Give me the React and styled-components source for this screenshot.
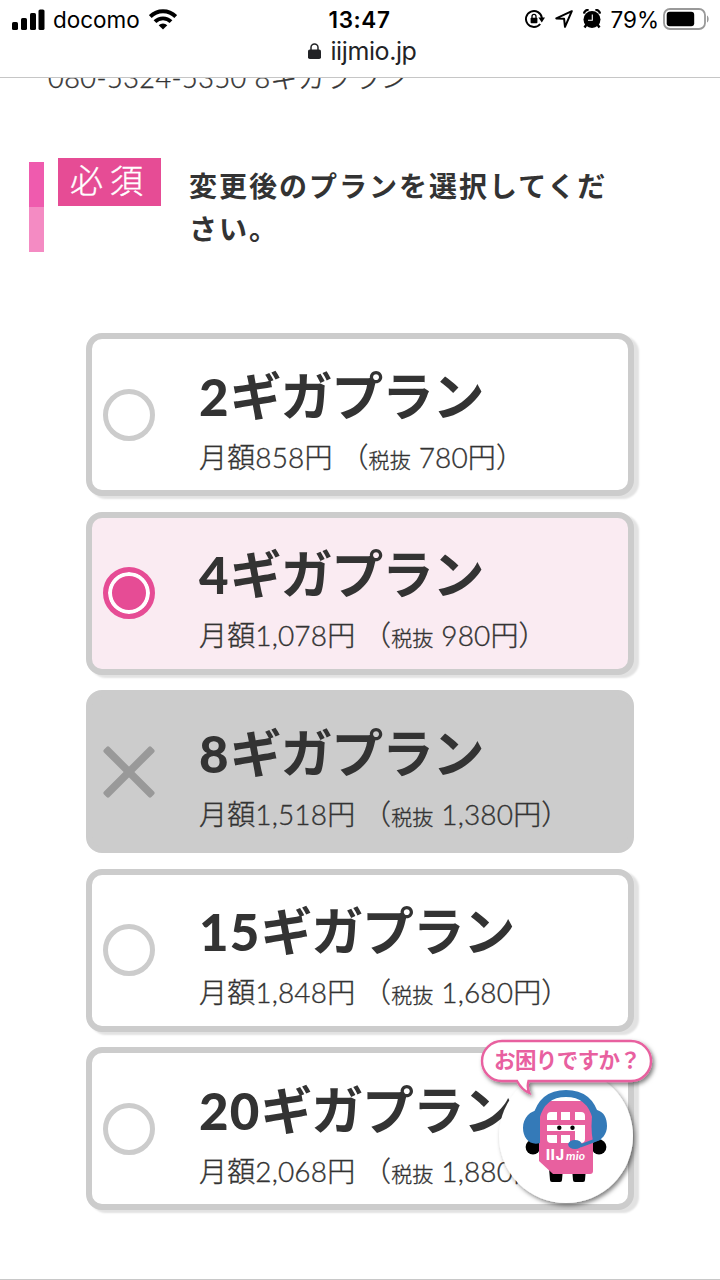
import React, { useState } from 'react';
import styled, { createGlobalStyle } from 'styled-components';

const GlobalStyle = createGlobalStyle`
  * {
    box-sizing: border-box;
  }

  body {
    margin: 0;
    background-color: #fff;
    color: #333;
    font-family: Lato, 'Noto Sans CJK JP', sans-serif;
  }
`;

const Screen = styled.div`
  display: flex;
  flex-direction: column;
  width: 720px;
  height: 1280px;
  overflow: hidden;
  border-bottom: 1px solid #c8c8c8;
`;

const BrowserHeader = styled.header`
  flex: none;
  height: 78px;
  border-bottom: 1px solid #c6c6c6;
  font-family: Inter, 'Liberation Sans', sans-serif;
  color: #000;
`;

const StatusBar = styled.div`
  display: grid;
  grid-template-columns: 1fr auto 1fr;
  align-items: center;
  height: 38px;
  padding: 0 11px 0 12px;
`;

const StatusGroup = styled.div`
  display: flex;
  align-items: center;
  gap: ${props => props.$gap || 0}px;
  justify-content: ${props => props.$align || 'flex-start'};

  svg {
    flex: none;
  }
`;

const Carrier = styled.span`
  margin: 1px 9px 0 8px;
  font-size: 22.5px;
  line-height: 36px;
`;

const Clock = styled.span`
  margin: 1px 2px 0 0;
  font-size: 22.5px;
  font-weight: 600;
  line-height: 36px;
  letter-spacing: 0.6px;
`;

const BatteryLevel = styled.span`
  margin: 1px 4px 0 9px;
  font-size: 22.5px;
  line-height: 36px;
`;

const AddressBar = styled.div`
  display: flex;
  align-items: center;
  justify-content: center;
  gap: 9px;
  height: 26px;
  padding-left: 5px;
  font-size: 25px;
  line-height: 26px;
  letter-spacing: -0.4px;
  color: #222326;
`;

const Content = styled.main`
  flex: 1;
  overflow: hidden;
`;

const CurrentPlan = styled.p`
  margin: -20px 0 0 48px;
  font-size: 27px;
  font-weight: 300;
  line-height: 40px;
  letter-spacing: 0.5px;
  white-space: nowrap;
  -webkit-text-stroke: 0.4px #333;
`;

const Question = styled.div`
  display: flex;
  align-items: flex-start;
  margin: 60px 0 0 29px;
`;

const Marker = styled.div`
  width: 15px;
  height: 90px;
  margin-top: 4px;
  background: linear-gradient(#ef5bae 50%, #f48bc3 50%);
`;

const RequiredLabel = styled.span`
  width: 103px;
  height: 48px;
  margin-left: 14px;
  padding-left: 12px;
  background-color: #e64c95;
  color: #fff;
  font-size: 33px;
  font-weight: 300;
  line-height: 44px;
  letter-spacing: 7px;
  white-space: nowrap;
  -webkit-text-stroke: 0.4px #fff;
`;

const QuestionText = styled.h2`
  width: 430px;
  margin: 7px 0 0 28px;
  font-size: 28px;
  font-weight: 700;
  line-height: 43px;
  letter-spacing: 2px;
`;

const PlanList = styled.ul`
  display: flex;
  flex-direction: column;
  gap: 15.5px;
  width: 547.5px;
  margin: 81px 0 0 86px;
  padding: 0;
  list-style: none;
`;

const PlanCard = styled.li`
  display: flex;
  align-items: center;
  height: 163px;
  padding: 0 10.5px;
  border: 6px solid #ccc;
  border-radius: 16px;
  background-color: ${props => (props.$disabled ? '#ccc' : props.$selected ? '#faebf2' : '#fff')};
  box-shadow: ${props => (props.$disabled ? 'none' : '4.5px 3px 2px #e2e2e2')};
  cursor: ${props => (props.$disabled ? 'default' : 'pointer')};

  > svg {
    flex: none;
  }
`;

const Radio = styled.span`
  flex: none;
  width: 52px;
  height: 52px;
  border: 5.5px solid ${props => (props.$selected ? '#e64c95' : '#ccc')};
  border-radius: 50%;
  background-color: ${props => (props.$selected ? '#e64c95' : '#fff')};
  box-shadow: ${props => (props.$selected ? 'inset 0 0 0 4px #fff' : 'none')};
`;

const PlanBody = styled.div`
  margin: 12px 0 0 44.5px;
  white-space: nowrap;
`;

const PlanName = styled.div`
  height: 66px;
  font-size: 52px;
  font-weight: 700;
  line-height: 66px;
  letter-spacing: -1.3px;

  b {
    font-size: 51px;
    font-weight: 900;
    letter-spacing: 1.2px;
  }
`;

const PlanPrice = styled.div`
  height: 44px;
  margin-top: 6px;
  font-size: 28px;
  font-weight: 300;
  line-height: 44px;
  letter-spacing: 0.15px;
  -webkit-text-stroke: 0.35px #333;

  small {
    font-size: 21px;
  }
`;

const HelpButton = styled.button`
  position: absolute;
  top: 1036px;
  left: 476px;
  width: 184px;
  height: 174px;
  padding: 0;
  border: none;
  background: none;
  cursor: pointer;

  svg {
    display: block;
  }
`;

const BubbleText = styled.text`
  font: 700 21.5px 'Noto Sans CJK JP', sans-serif;
  fill: #e8609f;
`;

const LogoText = styled.text`
  font: 800 14px Inter, sans-serif;
  fill: #fff;
`;

const LogoScript = styled.text`
  font: italic 700 12px Lato, sans-serif;
  fill: #fff;
`;

const plans = [
  { id: 2, price: '858', net: '780' },
  { id: 4, price: '1,078', net: '980' },
  { id: 8, price: '1,518', net: '1,380', disabled: true },
  { id: 15, price: '1,848', net: '1,680' },
  { id: 20, price: '2,068', net: '1,880' },
];

const SignalIcon = () => (
  <svg width="33" height="21" viewBox="0 0 33 21">
    <rect x="0" y="13" width="6" height="8" rx="1.6" />
    <rect x="9" y="9" width="6" height="12" rx="1.6" />
    <rect x="18" y="4" width="6" height="17" rx="1.6" />
    <rect x="26.5" y="0.5" width="6" height="20.5" rx="1.6" />
  </svg>
);

const WifiIcon = () => (
  <svg width="28" height="21" viewBox="0 0 28 21">
    <g fill="none" stroke="#000" strokeWidth="3.9">
      <path d="M1.3 7.5a18 18 0 0 1 25.4 0" />
      <path d="M6 12.7a11.4 11.4 0 0 1 16 0" />
    </g>
    <path d="M14 20.5l-4.3-4.3a6.2 6.2 0 0 1 8.6 0z" />
  </svg>
);

const RotationLockIcon = () => (
  <svg width="20" height="20" viewBox="0 0 20 20">
    <path d="M16.9 9A8 8 0 1 0 15.2 15" fill="none" stroke="#000" strokeWidth="1.9" />
    <path d="M13.4 8.6H20l-3.2 4.8z" />
    <rect x="5.6" y="8.8" width="6.8" height="5.4" rx="0.8" />
    <path d="M7 9V7.4a2 2 0 0 1 4 0V9" fill="none" stroke="#000" strokeWidth="1.3" />
  </svg>
);

const LocationIcon = () => (
  <svg width="18" height="18" viewBox="0 0 18 18">
    <path d="M16.8 1.2L1.3 8.4l7.8.4.9 8z" fill="none" stroke="#000" strokeWidth="2" strokeLinejoin="round" />
  </svg>
);

const AlarmIcon = () => (
  <svg width="18" height="20" viewBox="0 0 18 20">
    <circle cx="9" cy="10.5" r="8.5" />
    <path d="M1 4.6A4 4 0 0 1 5.6 1M17 4.6A4 4 0 0 0 12.4 1" fill="none" stroke="#000" strokeWidth="2.2" />
    <path d="M3.5 15.5L1.5 18.5M14.5 15.5l2 3" stroke="#000" strokeWidth="2.4" />
    <path d="M9.3 5.5v5.7H5" fill="none" stroke="#fff" strokeWidth="1.1" />
  </svg>
);

const BatteryIcon = () => (
  <svg width="46" height="22" viewBox="0 0 46 22">
    <rect x="1" y="1" width="41" height="20" rx="6" fill="none" stroke="#999" strokeWidth="1.8" />
    <rect x="3.7" y="3.7" width="27.5" height="14.6" rx="3" />
    <path d="M44 7.5c2.2 1.2 2.2 5.8 0 7z" fill="#999" />
  </svg>
);

const LockIcon = () => (
  <svg width="13" height="16" viewBox="0 0 13 16">
    <rect x="0" y="6.5" width="13" height="9.5" rx="1.8" fill="#222326" />
    <path d="M3 7.5V4.6a3.5 3.5 0 0 1 7 0v2.9" fill="none" stroke="#222326" strokeWidth="1.5" />
  </svg>
);

const CrossIcon = () => (
  <svg width="52" height="52" viewBox="0 0 52 52">
    <g fill="#999">
      <rect x="-7.5" y="22.2" width="67" height="7.6" rx="2" transform="rotate(45 26 26)" />
      <rect x="-7.5" y="22.2" width="67" height="7.6" rx="2" transform="rotate(-45 26 26)" />
    </g>
  </svg>
);

const HelpMascot = () => (
  <svg width="184" height="174" viewBox="476 1036 184 174">
    <defs>
      <filter id="shadow" x="-20%" y="-20%" width="140%" height="150%">
        <feDropShadow dx="2" dy="2.5" stdDeviation="2" floodColor="#000" floodOpacity="0.5" />
      </filter>
    </defs>
    <circle cx="566" cy="1136" r="67" fill="#fff" filter="url(#shadow)" />
    {/* speech bubble */}
    <path
      d="M502 1041h129a20 20 0 0 1 0 40H528.5c-1.2 4-1 8 .8 12-5-2-9-6-12.3-12H502a20 20 0 0 1 0-40z"
      fill="#fff"
      stroke="#e8609f"
      strokeWidth="2.4"
      filter="url(#shadow)"
    />
    <BubbleText x="494" y="1068" textLength="147">お困りですか？</BubbleText>
    {/* arms and legs */}
    <circle cx="533" cy="1147" r="7.4" />
    <circle cx="599" cy="1147" r="7.4" />
    <path d="M549 1168h14l-1 12q0 2-2 2h-8q-2 0-2-2zM572 1168h14l-1 12q0 2-2 2h-8q-2 0-2-2z" />
    {/* sim card body */}
    <path d="M546 1101h40q7 0 7 7v63q0 3-3 3h-37l-14-13v-53q0-7 7-7z" fill="#e8609f" />
    <g fill="#fff">
      <path d="M547 1120v-4q0-4 4-4h6v8zM561 1112h9v8h-9zM575 1112h6q4 0 4 4v4h-10z" />
      <path d="M547 1125h38v14q0 4-4 4h-6v-12h-28z" />
      <path d="M547 1135h10v8h-6q-4 0-4-4zM561 1135h9v8h-9z" />
    </g>
    <circle cx="559.3" cy="1127.8" r="2.2" />
    <circle cx="572.5" cy="1127.8" r="2.2" />
    {/* headset */}
    <path d="M536 1118c4-16 14-24.500 30-24.500s26 8.500 30 24.500" fill="none" stroke="#347ab8" strokeWidth="7" />
    <path d="M540 1110v33c-10 3-17-5-17-15s7-18 17-18zM597 1110c7 2 10 8 10 16s-5 15-14 16q-3-16 0-32z" fill="#347ab8" />
    <path d="M601 1138q-10 4-21 8" fill="none" stroke="#347ab8" strokeWidth="3.2" />
    <ellipse cx="575" cy="1144.500" rx="6.8" ry="4.6" fill="#347ab8" />
    <LogoText x="546" y="1160" textLength="18">IIJ</LogoText>
    <LogoScript x="566" y="1160" textLength="19">mio</LogoScript>
  </svg>
);

const App = () => {
  const [selected, setSelected] = useState(4);

  return (
    <>
      <GlobalStyle />
      <Screen>
        <BrowserHeader>
          <StatusBar>
            <StatusGroup>
              <SignalIcon />
              <Carrier>docomo</Carrier>
              <WifiIcon />
            </StatusGroup>
            <Clock>13:47</Clock>
            <StatusGroup $align="flex-end">
              <StatusGroup $gap={10}>
                <RotationLockIcon />
                <LocationIcon />
                <AlarmIcon />
              </StatusGroup>
              <BatteryLevel>79%</BatteryLevel>
              <BatteryIcon />
            </StatusGroup>
          </StatusBar>
          <AddressBar>
            <LockIcon />
            <span>iijmio.jp</span>
          </AddressBar>
        </BrowserHeader>

        <Content>
          <CurrentPlan>080-5324-5350 8ギガプラン</CurrentPlan>

          <Question>
            <Marker />
            <RequiredLabel>必須</RequiredLabel>
            <QuestionText>変更後のプランを選択してください。</QuestionText>
          </Question>

          <PlanList>
            {plans.map(plan => (
              <PlanCard
                key={plan.id}
                $selected={plan.id === selected}
                $disabled={plan.disabled}
                onClick={() => !plan.disabled && setSelected(plan.id)}
              >
                {plan.disabled ? <CrossIcon /> : <Radio $selected={plan.id === selected} />}
                <PlanBody>
                  <PlanName><b>{plan.id}</b>ギガプラン</PlanName>
                  <PlanPrice>
                    月額{plan.price}円 （<small>税抜</small> {plan.net}円）
                  </PlanPrice>
                </PlanBody>
              </PlanCard>
            ))}
          </PlanList>
        </Content>
      </Screen>

      <HelpButton>
        <HelpMascot />
      </HelpButton>
    </>
  );
};

export default App;
